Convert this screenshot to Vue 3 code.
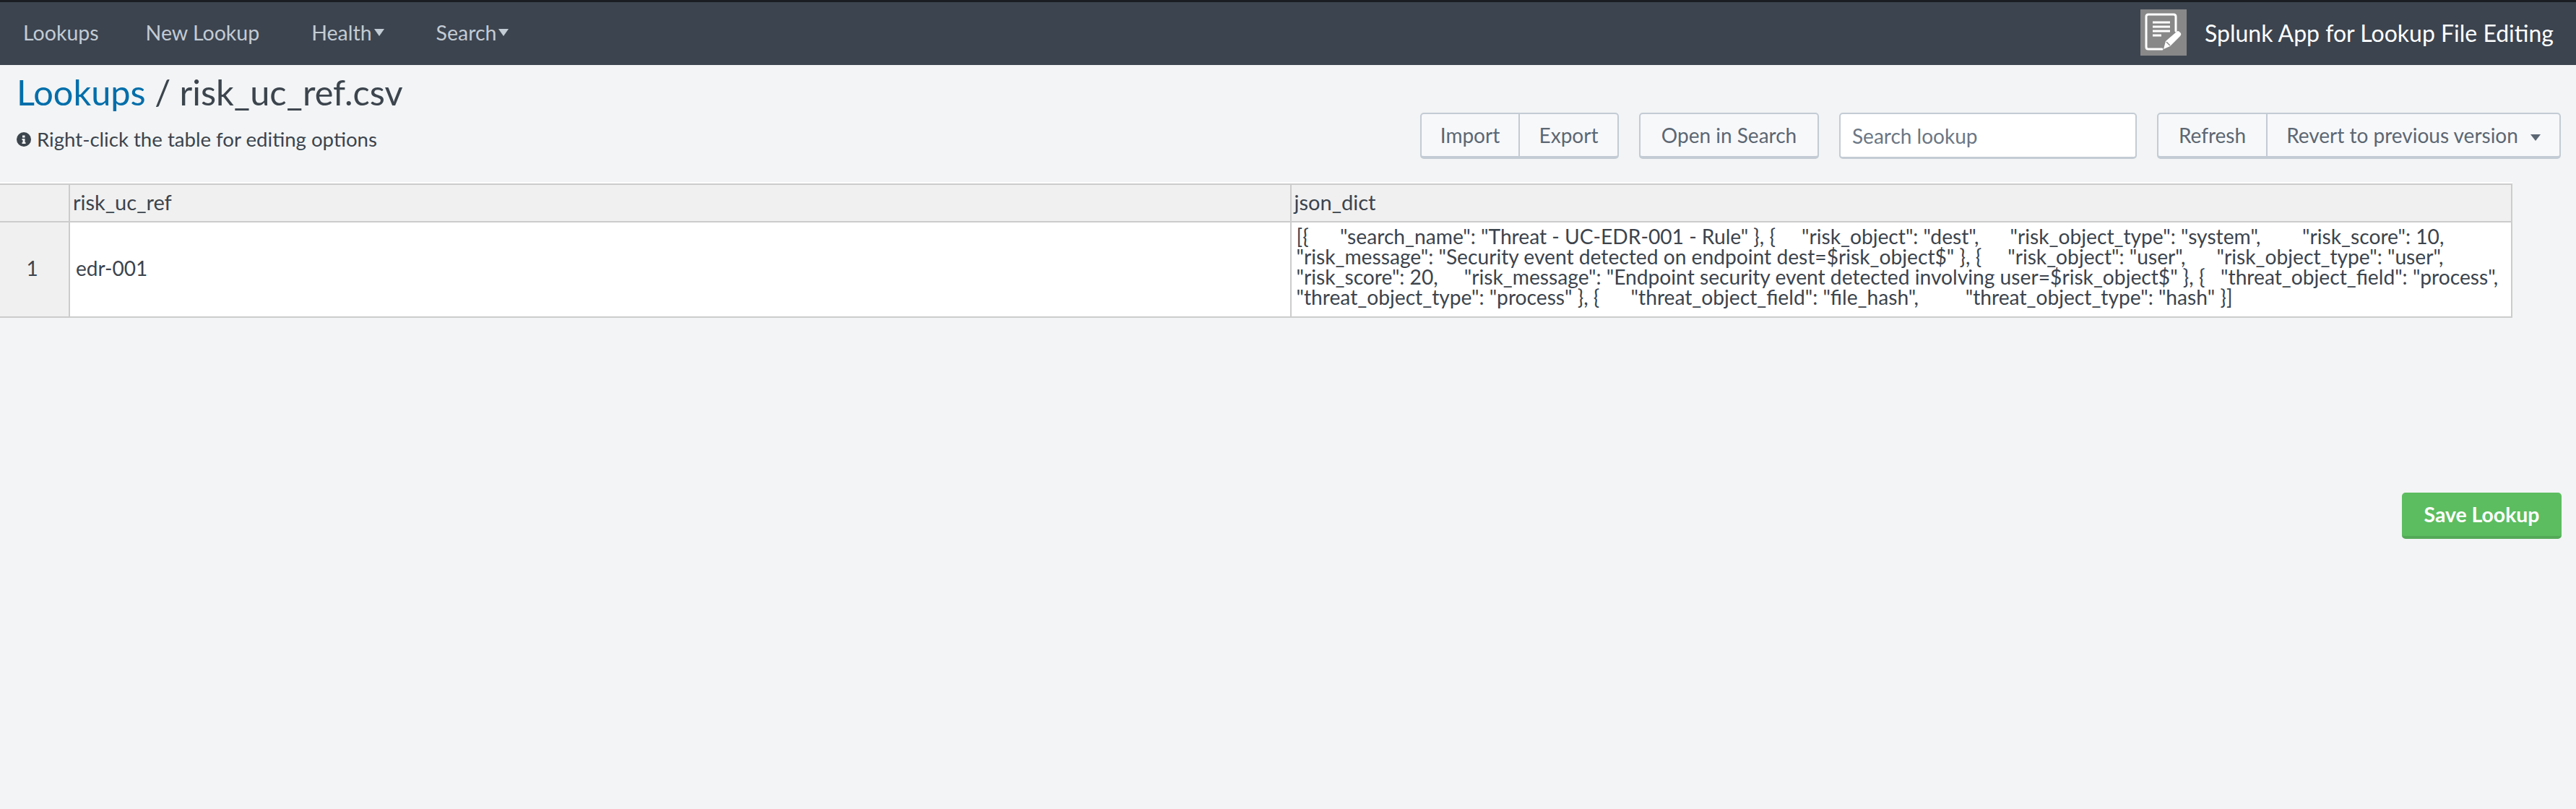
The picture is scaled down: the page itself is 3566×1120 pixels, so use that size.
<template>
  <div class="page">
    <header class="nav">
      <nav class="nav-links">
        <a class="nav-link lookups">Lookups</a>
        <a class="nav-link new">New Lookup</a>
        <a class="nav-link health">Health<span class="caret"></span></a>
        <a class="nav-link">Search<span class="caret"></span></a>
      </nav>
      <div class="brand">
        <div class="logo">
          <svg width="64" height="64" viewBox="0 0 64 64">
            <path d="M30 55 H11 Q8 55 8 52 V10 Q8 7 11 7 H46 Q49 7 49 10 V30" fill="none" stroke="#fff" stroke-width="3" stroke-linecap="round" />
            <path d="M17 18 H41 M17 24 H41 M17 30 H41 M17 36 H29" stroke="#fff" stroke-width="3" fill="none" />
            <path d="M32 55 L35 44 L50 31 Q52 29 54 31 L56 33 Q57 35 55 37 L41 51 Z" fill="#fff" />
            <path d="M36 45 L41 50" stroke="#888" stroke-width="1.5" />
          </svg>
        </div>
        <span class="brand-name">Splunk App for Lookup File Editing</span>
      </div>
    </header>

    <main class="content">
      <div class="top">
        <div class="titles">
          <h1 class="title"><a class="crumb">Lookups</a> / risk_uc_ref.csv</h1>
          <p class="hint">
            <svg class="info" width="20" height="20" viewBox="0 0 20 20">
              <circle cx="10" cy="10" r="10" fill="#3c444d" />
              <path d="M8 4.5 H11.5 V7.5 H8 Z M7.5 9 H11.5 V14 H12.5 V16 H7.5 V14 H8.5 V11 H7.5 Z" fill="#f2f4f5" />
            </svg>
            Right-click the table for editing options
          </p>
        </div>
        <div class="toolbar">
          <div class="btn-group io">
            <button class="btn import">Import</button>
            <button class="btn export">Export</button>
          </div>
          <button class="btn solo open">Open in Search</button>
          <input class="search" type="text" placeholder="Search lookup" />
          <div class="btn-group">
            <button class="btn refresh">Refresh</button>
            <button class="btn revert">Revert to previous version<span class="caret dark"></span></button>
          </div>
        </div>
      </div>

      <table class="grid">
        <thead>
          <tr>
            <th class="corner"></th>
            <th class="col-head">risk_uc_ref</th>
            <th class="col-head">json_dict</th>
          </tr>
        </thead>
        <tbody>
          <tr>
            <th class="row-head">1</th>
            <td class="cell-id">edr-001</td>
            <td class="cell-json">
              <div v-for="line in jsonLines" :key="line">{{ line }}</div>
            </td>
          </tr>
        </tbody>
      </table>

      <div class="actions">
        <button class="save">Save Lookup</button>
      </div>
    </main>
  </div>
</template>

<script setup>
const jsonLines = [
  '[{      "search_name": "Threat - UC-EDR-001 - Rule" }, {     "risk_object": "dest",      "risk_object_type": "system",        "risk_score": 10,',
  '"risk_message": "Security event detected on endpoint dest=$risk_object$" }, {     "risk_object": "user",      "risk_object_type": "user",',
  '"risk_score": 20,     "risk_message": "Endpoint security event detected involving user=$risk_object$" }, {   "threat_object_field": "process",',
  '"threat_object_type": "process" }, {      "threat_object_field": "file_hash",         "threat_object_type": "hash" }]',
];
</script>

<style>
html,
body {
  margin: 0;
  background: #f2f4f5;
}
</style>

<style scoped>
.page {
  min-height: 1120px;
  background: #f2f4f5;
  color: #3c444d;
  font-family: Lato, "Open Sans", sans-serif;
}

.nav {
  height: 90px;
  box-sizing: border-box;
  border-top: 3px solid #1a1d22;
  background: #3c444f;
  display: flex;
  align-items: center;
  justify-content: space-between;
  padding: 0 31px 3px 32px;
}

.nav-links {
  display: flex;
  gap: 65px;
  font-size: 28.5px;
  color: #c3cbd4;
}

.nav-link {
  display: flex;
  align-items: center;
}

.nav-link.new {
  margin-right: 7px;
}

.nav-link.health {
  margin-right: 7px;
}

.caret {
  display: inline-block;
  width: 0;
  height: 0;
  margin-left: 3px;
  border-left: 7px solid transparent;
  border-right: 7px solid transparent;
  border-top: 10px solid #c3cbd4;
}

.caret.dark {
  margin-left: 17px;
  border-top: 9px solid #5c6773;
  vertical-align: 3px;
}

.brand {
  display: flex;
  align-items: center;
  gap: 25px;
}

.logo {
  width: 64px;
  height: 64px;
  background: #888;
}

.brand-name {
  color: #fff;
  font-size: 32px;
}

.top {
  display: flex;
  justify-content: space-between;
  padding: 0 21px 0 23px;
  height: 164px;
  box-sizing: border-box;
}

.title {
  margin: 10px 0 0;
  font-size: 48.7px;
  font-weight: 400;
  line-height: 54px;
}

.crumb {
  color: #006eaa;
}

.hint {
  margin: 23px 0 0;
  font-size: 27.6px;
  line-height: 32px;
  display: flex;
  align-items: center;
  gap: 8px;
}

.toolbar {
  display: flex;
  align-items: flex-start;
  gap: 28px;
  padding-top: 66px;
}

.btn-group {
  display: flex;
}

.btn {
  height: 64px;
  box-sizing: border-box;
  margin: 0;
  background: #f7f8fa;
  border: 2px solid #c3cbd4;
  border-bottom-width: 4px;
  color: #5c6773;
  font-family: inherit;
  font-size: 28px;
  padding: 0;
}

.btn-group .btn:first-child {
  border-radius: 5px 0 0 5px;
  border-right-width: 1px;
}

.btn-group .btn:last-child {
  border-radius: 0 5px 5px 0;
  border-left-width: 1px;
}

.import {
  width: 137px;
}

.export {
  width: 138px;
}

.solo {
  border-radius: 5px;
}

.open {
  width: 249px;
}

.refresh {
  width: 152px;
}

.revert {
  width: 407px;
}

.search {
  width: 412px;
  height: 64px;
  box-sizing: border-box;
  background: #fff;
  border: 2px solid #c3cbd4;
  border-bottom-width: 3px;
  border-radius: 5px;
  padding: 0 16px;
  font-family: inherit;
  font-size: 28px;
  outline: none;
}

.search::placeholder {
  color: #6b7785;
  opacity: 1;
}

.grid {
  border-collapse: collapse;
  table-layout: fixed;
  width: 3478px;
  font-size: 28px;
  box-shadow: 0 -2px 0 #fff;
}

.grid th,
.grid td {
  border: 2px solid #ccc;
  font-weight: 400;
  padding: 0;
  box-sizing: border-box;
}

.grid tr > :first-child {
  border-left: none;
}

.corner,
.row-head {
  width: 96px;
  background: #f0f0f0;
}

.col-head {
  height: 52px;
  background: #f0f0f0;
  text-align: left;
  padding: 0 0 3px 4px !important;
  font-size: 29px;
}

.row-head {
  height: 132px;
  text-align: center;
  padding: 0 6px 4px 0 !important;
}

.cell-id,
.cell-json {
  background: #fff;
}

.cell-id {
  padding: 0 0 4px 8px !important;
}

.cell-json {
  padding: 0 0 8px 7px !important;
  font-size: 28.2px;
  line-height: 28px;
  white-space: pre;
  overflow: hidden;
}

.actions {
  display: flex;
  justify-content: flex-end;
  padding: 242px 20px 0 0;
}

.save {
  width: 221px;
  height: 64px;
  border: none;
  border-bottom: 4px solid #53a957;
  border-radius: 5px;
  background: #5cbd60;
  color: #fff;
  font-family: inherit;
  font-size: 28.4px;
  font-weight: 700;
  padding: 0;
}
</style>
